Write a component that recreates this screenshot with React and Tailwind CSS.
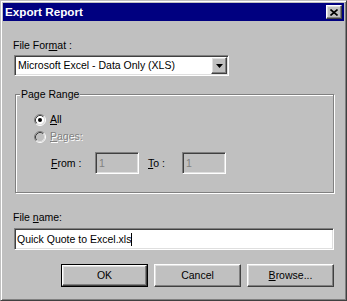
const raised =
  "border border-t-white border-l-white border-b-[#404040] border-r-[#404040] shadow-[inset_-1px_-1px_0_#808080,inset_1px_1px_0_#dfdfdf]";
const sunken =
  "border border-t-[#808080] border-l-[#808080] border-b-white border-r-white shadow-[inset_1px_1px_0_#404040,inset_-1px_-1px_0_#dfdfdf]";
const disabledText = "text-[#808080] [text-shadow:1px_1px_0_#fff]";

function Radio({ checked, disabled }) {
  return (
    <svg width="12" height="12" viewBox="0 0 12 12" className="shrink-0">
      <circle cx="6" cy="6" r="4.5" fill={disabled ? "#c0c0c0" : "#fff"} />
      <path d="M2.11 9.89 A5.5 5.5 0 0 1 9.89 2.11" fill="none" stroke="#808080" strokeWidth="1" />
      <path d="M9.89 2.11 A5.5 5.5 0 0 1 2.11 9.89" fill="none" stroke="#fff" strokeWidth="1" />
      <path d="M2.82 9.18 A4.5 4.5 0 0 1 9.18 2.82" fill="none" stroke="#404040" strokeWidth="1" />
      <path d="M9.18 2.82 A4.5 4.5 0 0 1 2.82 9.18" fill="none" stroke="#dfdfdf" strokeWidth="1" />
      {checked && <circle cx="6" cy="6" r="2" fill="#000" />}
    </svg>
  );
}

function Button({ children, isDefault }) {
  if (isDefault) {
    return (
      <div className="w-[87px] h-[23px] border border-black flex">
        <button className={`flex-1 ${raised} bg-[#c0c0c0] flex items-center justify-center leading-none`}>
          {children}
        </button>
      </div>
    );
  }
  return (
    <button className={`w-[87px] h-[23px] ${raised} bg-[#c0c0c0] flex items-center justify-center leading-none`}>
      {children}
    </button>
  );
}

export default function App() {
  return (
    <div className="w-[347px] h-[301px] bg-[#c0c0c0] border border-t-[#c0c0c0] border-l-[#c0c0c0] border-b-[#404040] border-r-[#404040] shadow-[inset_1px_1px_0_#fff,inset_-1px_-1px_0_#808080] p-[2px] flex flex-col font-['Liberation_Sans',Arial,sans-serif] text-[10.5px] text-black select-none">
      {/* Title bar */}
      <div className="h-[18px] bg-[#000080] flex items-center justify-between pl-[2px] pr-[2px]">
        <span className="text-white font-bold text-[11.7px] leading-none">Export Report</span>
        <button className={`w-[16px] h-[14px] ${raised} bg-[#c0c0c0] flex items-center justify-center`}>
          <svg width="8" height="7" viewBox="0 0 8 7">
            <path d="M0.5 0.5 L7.5 6.5 M7.5 0.5 L0.5 6.5" stroke="#000" strokeWidth="1.6" />
          </svg>
        </button>
      </div>

      <div className="pl-[10px] pr-[10px] flex flex-col">
        {/* File format */}
        <div className="mt-[18px] h-[13px] leading-[13px]">
          File For<u>m</u>at :
        </div>
        <div className={`mt-[3px] ml-px w-[215px] h-[21px] ${sunken} bg-white flex items-stretch p-px`}>
          <div className="flex-1 pl-[2px] flex items-center leading-none">Microsoft Excel - Data Only (XLS)</div>
          <div className={`w-[16px] ${raised} bg-[#c0c0c0] flex items-center justify-center`}>
            <svg width="7" height="4" viewBox="0 0 7 4">
              <polygon points="0,0 7,0 3.5,4" fill="#000" />
            </svg>
          </div>
        </div>

        {/* Page range group */}
        <div className="relative mt-[18px] ml-[2px] w-[319px] h-[99px] border border-[#808080] shadow-[inset_1px_1px_0_#fff,1px_1px_0_#fff]">
          <span className="absolute -top-[7px] left-[4px] px-px bg-[#c0c0c0] leading-[13px]">Page Range</span>
          <div className="flex flex-col pl-[18px]">
            <div className="mt-[18px] h-[13px] flex items-center gap-[4px]">
              <Radio checked />
              <span className="leading-[13px]"><u>A</u>ll</span>
            </div>
            <div className="mt-[4px] h-[13px] flex items-center gap-[4px]">
              <Radio disabled />
              <span className={`leading-[13px] ${disabledText}`}><u>P</u>ages:</span>
            </div>
            <div className="mt-[9px] flex items-center pl-[17px]">
              <span className="w-[44px] leading-[13px]"><u>F</u>rom :</span>
              <div className={`w-[44px] h-[22px] ${sunken} bg-[#c0c0c0] flex items-center pl-[3px] leading-none text-[#808080]`}>1</div>
              <span className="ml-[9px] w-[34px] leading-[13px]"><u>T</u>o :</span>
              <div className={`w-[44px] h-[22px] ${sunken} bg-[#c0c0c0] flex items-center pl-[3px] leading-none text-[#808080]`}>1</div>
            </div>
          </div>
        </div>

        {/* File name */}
        <div className="mt-[18px] h-[13px] leading-[13px]">
          File <u>n</u>ame:
        </div>
        <div className={`mt-[4px] ml-px w-[320px] h-[22px] ${sunken} bg-white flex items-center pl-[2px] leading-none`}>
          <span>Quick Quote to Excel.xls</span>
          <span className="w-px h-[13px] bg-black" />
        </div>

        {/* Buttons */}
        <div className="mt-[14px] flex justify-end gap-[6px]">
          <Button isDefault>OK</Button>
          <Button>Cancel</Button>
          <Button>
            <span><u>B</u>rowse...</span>
          </Button>
        </div>
      </div>
    </div>
  );
}
